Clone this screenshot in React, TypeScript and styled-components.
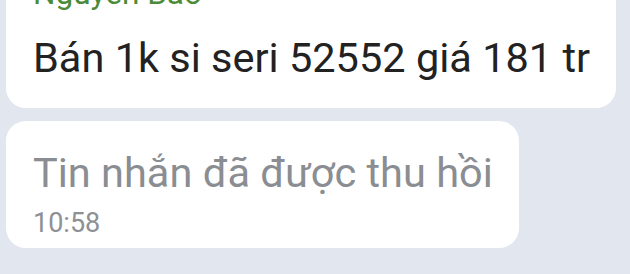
import styled, { createGlobalStyle } from "styled-components";

const GlobalStyle = createGlobalStyle`
  html, body {
    margin: 0;
    padding: 0;
    background: #e2e7ef;
    overflow: hidden;
  }
`;

const Chat = styled.div`
  height: 274px;
  overflow: hidden;
  font-family: Roboto, "Liberation Sans", sans-serif;
`;

const MessageList = styled.div`
  display: flex;
  flex-direction: column;
  align-items: flex-start;
  gap: 13px;
  margin-top: -52px;
  padding-left: 6px;
`;

const Bubble = styled.div`
  background: #ffffff;
  border-radius: 20px;
  padding: 28px 26px 26px 27px;
  display: flex;
  flex-direction: column;
`;

const Sender = styled.div`
  color: #4a8a38;
  font-size: 31.5px;
  line-height: 36px;
  margin-bottom: 22px;
`;

const Text = styled.div<{ $recalled?: boolean }>`
  color: ${(p) => (p.$recalled ? "#8a8d92" : "#222222")};
  font-size: 41.5px;
  line-height: 48px;
  white-space: nowrap;
`;

const Time = styled.div`
  color: #8d9095;
  font-size: 27px;
  line-height: 32px;
  margin-top: 10px;
  margin-bottom: -17px;
`;

export default function App() {
  return (
    <Chat>
      <GlobalStyle />
      <MessageList>
        <Bubble>
          <Sender>Nguyễn Bảo</Sender>
          <Text>Bán 1k si seri 52552 giá 181 tr</Text>
        </Bubble>
        <Bubble>
          <Text $recalled>Tin nhắn đã được thu hồi</Text>
          <Time>10:58</Time>
        </Bubble>
      </MessageList>
    </Chat>
  );
}
